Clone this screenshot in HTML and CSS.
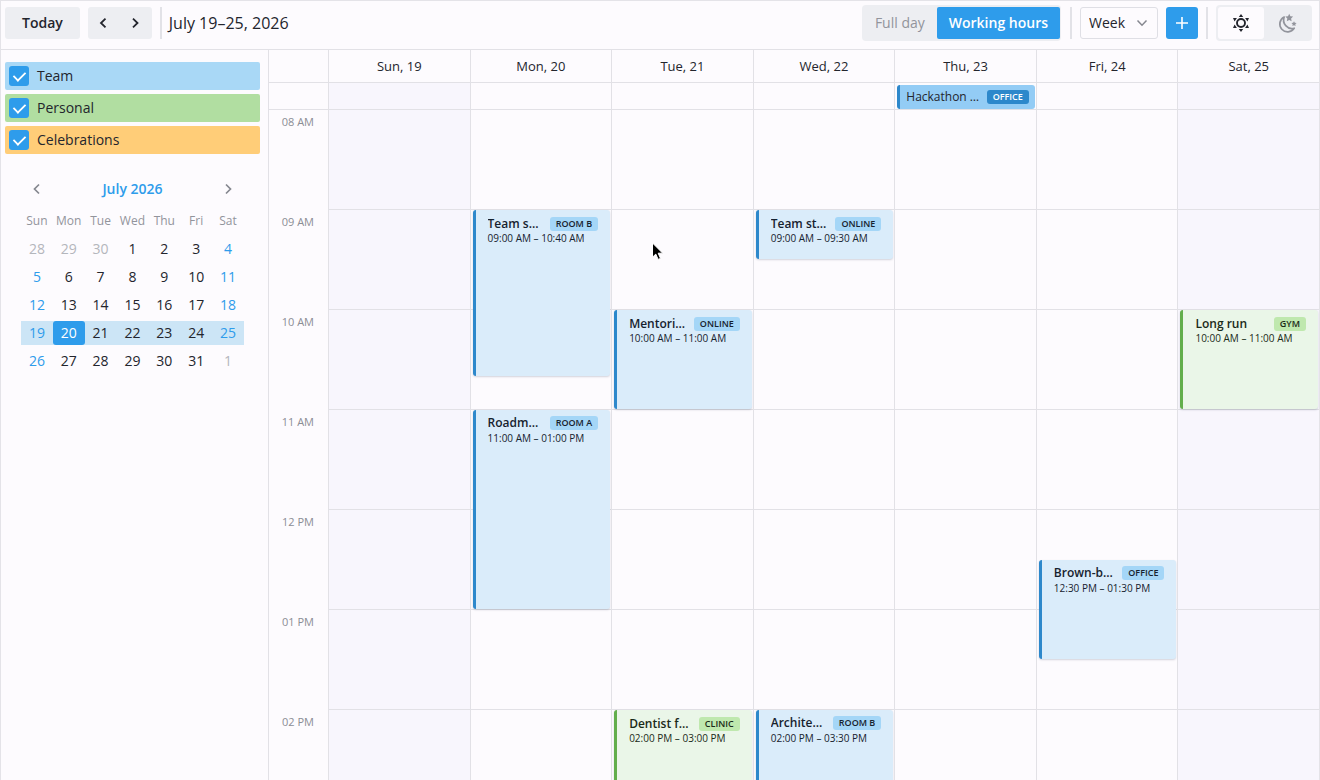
FILE: index.html
```html
<!DOCTYPE html>
<html lang="en">
<head>
	<meta charset="utf-8">
	<meta name="viewport" content="width=device-width, initial-scale=1">
	<title>Calendar</title>
	<link rel="stylesheet" href="styles.css">
</head>
<body>
	<div class="scheduler">
		<header class="toolbar">
			<button class="btn btn--today" type="button">Today</button>
			<div class="pager">
				<button class="pager__btn" type="button" aria-label="Previous week">
					<svg width="32" height="32" viewBox="0 0 32 32"><path d="M17.500 11.700L13 16l4.500 4.300"/></svg>
				</button>
				<button class="pager__btn" type="button" aria-label="Next week">
					<svg width="32" height="32" viewBox="0 0 32 32"><path d="M13 11.700l4.500 4.300-4.500 4.300"/></svg>
				</button>
			</div>
			<div class="divider"></div>
			<h1 class="toolbar__title">July 19–25, 2026</h1>

			<div class="toolbar__right">
				<div class="hours">
					<button class="hours__btn" type="button">Full day</button>
					<button class="hours__btn hours__btn--active" type="button">Working hours</button>
				</div>
				<div class="divider"></div>
				<div class="view">
					<select class="view__select" aria-label="View">
						<option>Day</option>
						<option selected>Week</option>
						<option>Month</option>
					</select>
					<svg class="view__arrow" width="12" height="8" viewBox="0 0 12 8"><path d="M1.500 1.500L6 6.200l4.500-4.700"/></svg>
				</div>
				<button class="btn-add" type="button" aria-label="Add event">
					<svg width="14" height="14" viewBox="0 0 14 14"><path d="M7 1v12M1 7h12"/></svg>
				</button>
				<div class="divider"></div>
				<div class="theme">
					<button class="theme__btn theme__btn--active" type="button" aria-label="Light theme">
						<svg width="18" height="18" viewBox="0 0 18 18">
							<circle cx="9" cy="9" r="4" fill="none" stroke="currentColor" stroke-width="1.900"/>
							<path fill="currentColor" d="M9 0l2.200 3H6.800zM9 18l2.200-3H6.800zM1 4l3.900.1-2.300 3.300zM17 4l-3.900.1 2.300 3.300zM1 14l3.900-.1-2.300-3.300zM17 14l-3.900-.1 2.300-3.300z"/>
						</svg>
					</button>
					<button class="theme__btn" type="button" aria-label="Dark theme">
						<svg width="20" height="20" viewBox="0 0 20 20">
							<path fill="none" stroke="currentColor" stroke-width="1.700" stroke-linejoin="round" d="M7.200 4A7.800 7.800 0 1 0 17.200 15.200 8.400 8.400 0 0 1 7.200 4z"/>
							<path fill="currentColor" d="M12.200.8l1.200 2.500 2.700.3-2 1.900.5 2.800-2.400-1.400-2.400 1.400.5-2.800-2-1.900 2.700-.3zM17 8.200l.8 1.600 1.800.2-1.300 1.300.3 1.800-1.600-.9-1.600.9.3-1.800-1.300-1.300 1.800-.2z"/>
						</svg>
					</button>
				</div>
			</div>
		</header>

		<div class="main">
			<aside class="sidebar">
				<div class="filters">
					<label class="filter filter--team"><input class="filter__box" type="checkbox" checked>Team</label>
					<label class="filter filter--personal"><input class="filter__box" type="checkbox" checked>Personal</label>
					<label class="filter filter--celebrations"><input class="filter__box" type="checkbox" checked>Celebrations</label>
				</div>

				<div class="mini">
					<div class="mini__head">
						<button class="mini__nav" type="button" aria-label="Previous month">
							<svg width="32" height="24" viewBox="0 0 32 24"><path d="M18 7.500L13.500 12l4.500 4.500"/></svg>
						</button>
						<button class="mini__month" type="button">July 2026</button>
						<button class="mini__nav" type="button" aria-label="Next month">
							<svg width="32" height="24" viewBox="0 0 32 24"><path d="M14 7.500l4.500 4.500-4.500 4.500"/></svg>
						</button>
					</div>
					<table class="mini__table">
						<thead>
							<tr><th>Sun</th><th>Mon</th><th>Tue</th><th>Wed</th><th>Thu</th><th>Fri</th><th>Sat</th></tr>
						</thead>
						<tbody>
							<tr><td class="out">28</td><td class="out">29</td><td class="out">30</td><td>1</td><td>2</td><td>3</td><td>4</td></tr>
							<tr><td>5</td><td>6</td><td>7</td><td>8</td><td>9</td><td>10</td><td>11</td></tr>
							<tr><td>12</td><td>13</td><td>14</td><td>15</td><td>16</td><td>17</td><td>18</td></tr>
							<tr class="current"><td>19</td><td class="today"><span>20</span></td><td>21</td><td>22</td><td>23</td><td>24</td><td>25</td></tr>
							<tr><td>26</td><td>27</td><td>28</td><td>29</td><td>30</td><td>31</td><td class="out">1</td></tr>
						</tbody>
					</table>
				</div>
			</aside>

			<section class="week">
				<div class="week__row week__row--head">
					<div class="week__corner"></div>
					<div class="week__name">Sun, 19</div>
					<div class="week__name">Mon, 20</div>
					<div class="week__name">Tue, 21</div>
					<div class="week__name">Wed, 22</div>
					<div class="week__name">Thu, 23</div>
					<div class="week__name">Fri, 24</div>
					<div class="week__name">Sat, 25</div>
				</div>
				<!-- all day events -->
				<div class="week__row week__row--allday">
					<div class="week__corner"></div>
					<div class="week__allday weekend"></div>
					<div class="week__allday"></div>
					<div class="week__allday"></div>
					<div class="week__allday"></div>
					<div class="week__allday">
						<div class="allday-event">
							<span class="allday-event__title">Hackathon day</span>
							<span class="badge badge--solid">OFFICE</span>
						</div>
					</div>
					<div class="week__allday"></div>
					<div class="week__allday weekend"></div>
				</div>
				<div class="week__row week__row--body">
					<div class="times">
						<div class="times__item">08 AM</div>
						<div class="times__item">09 AM</div>
						<div class="times__item">10 AM</div>
						<div class="times__item">11 AM</div>
						<div class="times__item">12 PM</div>
						<div class="times__item">01 PM</div>
						<div class="times__item">02 PM</div>
					</div>
					<!-- one grid row is 10 minutes, row 1 is 08:00 -->
					<div class="day weekend"></div>
					<div class="day">
						<div class="event" style="grid-row: 7 / span 10">
							<div class="event__top"><span class="event__title">Team sync</span><span class="badge">ROOM B</span></div>
							<div class="event__time">09:00 AM – 10:40 AM</div>
						</div>
						<div class="event" style="grid-row: 19 / span 12">
							<div class="event__top"><span class="event__title">Roadmap</span><span class="badge">ROOM A</span></div>
							<div class="event__time">11:00 AM – 01:00 PM</div>
						</div>
					</div>
					<div class="day">
						<div class="event" style="grid-row: 13 / span 6">
							<div class="event__top"><span class="event__title">Mentoring</span><span class="badge">ONLINE</span></div>
							<div class="event__time">10:00 AM – 11:00 AM</div>
						</div>
						<div class="event event--green" style="grid-row: 37 / span 6">
							<div class="event__top"><span class="event__title">Dentist follow-up</span><span class="badge">CLINIC</span></div>
							<div class="event__time">02:00 PM – 03:00 PM</div>
						</div>
						<svg class="cursor" width="14" height="20" viewBox="0 0 14 20"><path d="M1.500 1v14.200l3.300-3.100 2.300 5.300 2.400-1-2.300-5.200h4.500z"/></svg>
					</div>
					<div class="day">
						<div class="event" style="grid-row: 7 / span 3">
							<div class="event__top"><span class="event__title">Team standup</span><span class="badge">ONLINE</span></div>
							<div class="event__time">09:00 AM – 09:30 AM</div>
						</div>
						<div class="event" style="grid-row: 37 / span 9">
							<div class="event__top"><span class="event__title">Architecture</span><span class="badge">ROOM B</span></div>
							<div class="event__time">02:00 PM – 03:30 PM</div>
						</div>
					</div>
					<div class="day"></div>
					<div class="day">
						<div class="event" style="grid-row: 28 / span 6">
							<div class="event__top"><span class="event__title">Brown-bag</span><span class="badge">OFFICE</span></div>
							<div class="event__time">12:30 PM – 01:30 PM</div>
						</div>
					</div>
					<div class="day weekend">
						<div class="event event--green" style="grid-row: 13 / span 6">
							<div class="event__top"><span class="event__title">Long run</span><span class="badge">GYM</span></div>
							<div class="event__time">10:00 AM – 11:00 AM</div>
						</div>
					</div>
				</div>
			</section>
		</div>
	</div>
</body>
</html>
```
FILE: styles.css
```css
* {
	box-sizing: border-box;
}
body {
	margin: 0;
	background: #fdfbfe;
	color: #23252d;
	font-family: "Open Sans", "Noto Sans", sans-serif;
	font-size: 14px;
	line-height: 20px;
}
button,
select {
	margin: 0;
	padding: 0;
	border: none;
	background: none;
	color: inherit;
	font: inherit;
}
svg {
	display: block;
}
.scheduler {
	display: flex;
	flex-direction: column;
	height: 100vh;
	overflow: hidden;
	border: 1px solid #e4e3e8;
	border-bottom: none;
}

/* toolbar */
.toolbar {
	display: flex;
	flex: none;
	align-items: center;
	height: 49px;
	padding: 0 7px 4px 4px;
	border-bottom: 1px solid #e2e1e6;
}
.btn {
	height: 32px;
	padding: 0 17px;
	border-radius: 3px;
	background: #edeef2;
	font-weight: 600;
}
.pager {
	display: flex;
	margin: 0 8px;
	border-radius: 3px;
	background: #edeef2;
}
.pager__btn svg {
	fill: none;
	stroke: #23252d;
	stroke-width: 1.8;
}
.divider {
	width: 2px;
	height: 32px;
	background: #e2e2e7;
}
.toolbar__title {
	margin: 0 0 0 7px;
	font-size: 16px;
	font-weight: 400;
}
.toolbar__right {
	display: flex;
	align-items: center;
	margin-left: auto;
}
.hours {
	display: flex;
	margin-right: 9px;
	padding: 2px 1px;
	border-radius: 4px;
	background: #edeef2;
}
.hours__btn {
	height: 32px;
	padding: 0 12px;
	color: #92949c;
}
.hours__btn--active {
	border-radius: 2px;
	background: #2e9ceb;
	color: #fff;
	font-weight: 600;
}
.view {
	position: relative;
	margin: 0 8px;
}
.view__select {
	display: block;
	width: 78px;
	height: 32px;
	padding: 0 8px;
	border: 1px solid #dfdfe5;
	border-radius: 3px;
	appearance: none;
}
.view__arrow {
	position: absolute;
	top: 12px;
	right: 10px;
	fill: none;
	stroke: #85878f;
	stroke-width: 1.5;
	pointer-events: none;
}
.btn-add {
	display: flex;
	align-items: center;
	justify-content: center;
	width: 32px;
	height: 32px;
	margin-right: 8px;
	border-radius: 3px;
	background: #2e9ceb;
}
.btn-add svg {
	stroke: #fff;
	stroke-width: 1.6;
}
.theme {
	display: flex;
	margin-left: 8px;
	padding: 2px;
	border-radius: 4px;
	background: #edeef2;
}
.theme__btn {
	display: flex;
	align-items: center;
	justify-content: center;
	width: 46px;
	height: 32px;
	color: #92949c;
}
.theme__btn--active {
	border-radius: 3px;
	background: #fdfbfe;
	color: #23252d;
}

.main {
	display: flex;
	flex: 1;
	min-height: 0;
}

/* sidebar */
.sidebar {
	flex: none;
	width: 268px;
	padding: 12px 8px 0 4px;
	border-right: 1px solid #e2e1e6;
}
.filters {
	display: flex;
	flex-direction: column;
	gap: 4px;
}
.filter {
	display: flex;
	align-items: center;
	gap: 8px;
	height: 28px;
	padding: 0 4px;
	border-radius: 2px;
}
.filter--team {
	background: #a9d8f6;
}
.filter--personal {
	background: #b1dea1;
}
.filter--celebrations {
	background: #ffcd78;
}
.filter__box {
	display: flex;
	align-items: center;
	justify-content: center;
	width: 20px;
	height: 20px;
	margin: 0;
	border-radius: 3px;
	background: #2e9ceb;
	appearance: none;
}
.filter__box:checked::after {
	content: "";
	width: 11px;
	height: 6px;
	margin-bottom: 3px;
	border: solid #fff;
	border-width: 0 0 2px 2px;
	transform: rotate(-45deg) scale(0.9);
}
.mini {
	width: 223px;
	margin: 23px 0 0 16px;
}
.mini__head {
	display: flex;
	align-items: center;
	justify-content: space-between;
}
.mini__nav svg {
	fill: none;
	stroke: #85878f;
	stroke-width: 1.7;
}
.mini__month {
	color: #2e9ceb;
	font-weight: 600;
}
.mini__table {
	width: 100%;
	margin-top: 4px;
	border-collapse: separate;
	border-spacing: 0 4px;
	table-layout: fixed;
	text-align: center;
}
.mini__table th {
	height: 24px;
	padding: 0;
	color: #92949c;
	font-size: 12px;
	font-weight: 400;
}
.mini__table td {
	height: 24px;
	padding: 0;
}
.mini__table td:first-child,
.mini__table td:last-child {
	color: #2e9ceb;
}
.mini__table td.out {
	color: #b4b6bc;
}
.mini__table .current td {
	background: #cce5f6;
}
.mini__table .today span {
	display: block;
	border-radius: 3px;
	background: #2e9ceb;
	color: #fff;
	line-height: 24px;
}

/* week */
.week {
	display: flex;
	flex: 1;
	flex-direction: column;
	min-width: 0;
	overflow: hidden;
}
.week__row {
	display: grid;
	flex: none;
	grid-template-columns: 59px repeat(7, minmax(0, 1fr));
}
.week__row--head {
	height: 33px;
	border-bottom: 1px solid #e2e1e6;
}
.week__row--allday {
	height: 26px;
}
.week__name,
.week__allday,
.day {
	border-left: 1px solid #e2e1e6;
}
.week__name {
	font-size: 13px;
	font-weight: 500;
	line-height: 32px;
	text-align: center;
}
.week__corner {
	min-width: 0;
}
.weekend {
	background-color: #f8f6fd;
}
.allday-event {
	display: flex;
	align-items: center;
	gap: 6px;
	height: 24px;
	margin: 2px 1px 0 2px;
	padding: 0 6px;
	border-left: 3px solid #2d88cb;
	border-radius: 3px;
	background: #93ccf5;
}
.allday-event__title {
	flex: 1;
	overflow: hidden;
	font-size: 12px;
	text-overflow: ellipsis;
	white-space: nowrap;
}
.times {
	border-top: 1px solid #e2e1e6;
}
.times__item {
	height: 100px;
	padding: 2px 14px 0 0;
	color: #8b8d95;
	font-size: 11px;
	text-align: right;
}
.day {
	position: relative;
	display: grid;
	grid-template-rows: repeat(48, 1fr);
	height: 800px;
	background-image: linear-gradient(#e2e1e6 1px, transparent 1px);
	background-size: 100% 100px;
}
.event {
	display: flex;
	flex-direction: column;
	min-width: 0;
	min-height: 0;
	margin: 1px 1px 0 2px;
	padding: 6px 12px 0;
	border-left: 3px solid #2d88cb;
	border-radius: 3px;
	background: #daecfa;
	box-shadow: 0 1px 2px rgba(40, 50, 80, 0.2);
	color: #16222e;
}
.event--green {
	border-color: #62ae4b;
	background: #eaf6e8;
	color: #1a2a18;
}
.event__top {
	display: flex;
	align-items: center;
	gap: 8px;
	height: 15px;
}
.event__title {
	flex: 1;
	overflow: hidden;
	font-size: 12px;
	font-weight: 600;
	line-height: 16px;
	text-overflow: ellipsis;
	white-space: nowrap;
}
.event__time {
	font-size: 10px;
	line-height: 14px;
	white-space: nowrap;
}
.badge {
	flex: none;
	padding: 0 6px;
	border-radius: 3px;
	background: #a4d6f7;
	font-size: 9px;
	font-weight: 600;
	line-height: 14px;
}
.badge--solid {
	background: #2d88cb;
	color: #fff;
}
.event--green .badge {
	background: #bfe8ae;
}
.cursor {
	position: absolute;
	top: 133px;
	left: 39px;
	fill: #000;
	stroke: #fff;
	stroke-width: 1;
}
```
